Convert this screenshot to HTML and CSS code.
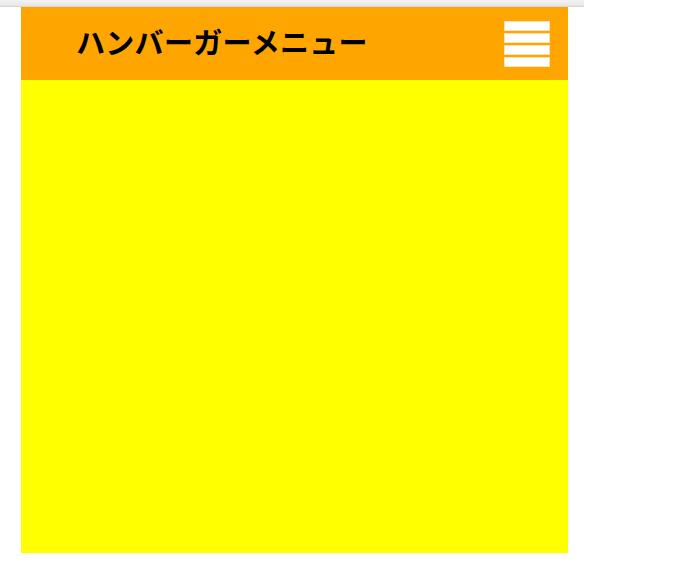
FILE: index.html
```html
<!DOCTYPE html>
<html lang="ja">
<head>
<meta charset="utf-8">
<title>ハンバーガーメニュー</title>
<link rel="stylesheet" href="styles.css">
</head>
<body>
<div class="topbar"></div>
<div class="page">
  <header class="header">
    <h1 class="title">ハンバーガーメニュー</h1>
    <div class="menu-btn" aria-label="menu">
      <span class="bar"></span>
      <span class="bar"></span>
      <span class="bar"></span>
      <span class="bar"></span>
    </div>
  </header>
  <main class="content"></main>
</div>
</body>
</html>
```
FILE: styles.css
```css
html, body {
  margin: 0;
  padding: 0;
  background: #ffffff;
}

body {
  font-family: "Noto Sans CJK JP", "Noto Sans", sans-serif;
}

.topbar {
  width: 584px;
  height: 6px;
  background: linear-gradient(#f3f3f3, #e6e6e6);
  border-bottom: 1px solid #d8d8d8;
}

.page {
  width: 547px;
  margin-left: 21px;
}

.header {
  height: 73px;
  background: #ffa500;
  display: flex;
  align-items: flex-start;
  justify-content: space-between;
  box-sizing: border-box;
  padding: 0 18px 0 55px;
}

.title {
  margin: 0;
  font-size: 29px;
  font-weight: bold;
  line-height: 1;
  letter-spacing: 0.3px;
  color: #000000;
  padding-top: 20px;
}

.menu-btn {
  display: flex;
  flex-direction: column;
  gap: 2px;
  margin-top: 14px;
}

.bar {
  display: block;
  width: 46px;
  height: 10px;
  box-sizing: border-box;
  background: #ffffff;
  border: 1px solid #ffe3b0;
}

.content {
  display: block;
  height: 473px;
  background: #ffff00;
}
```
